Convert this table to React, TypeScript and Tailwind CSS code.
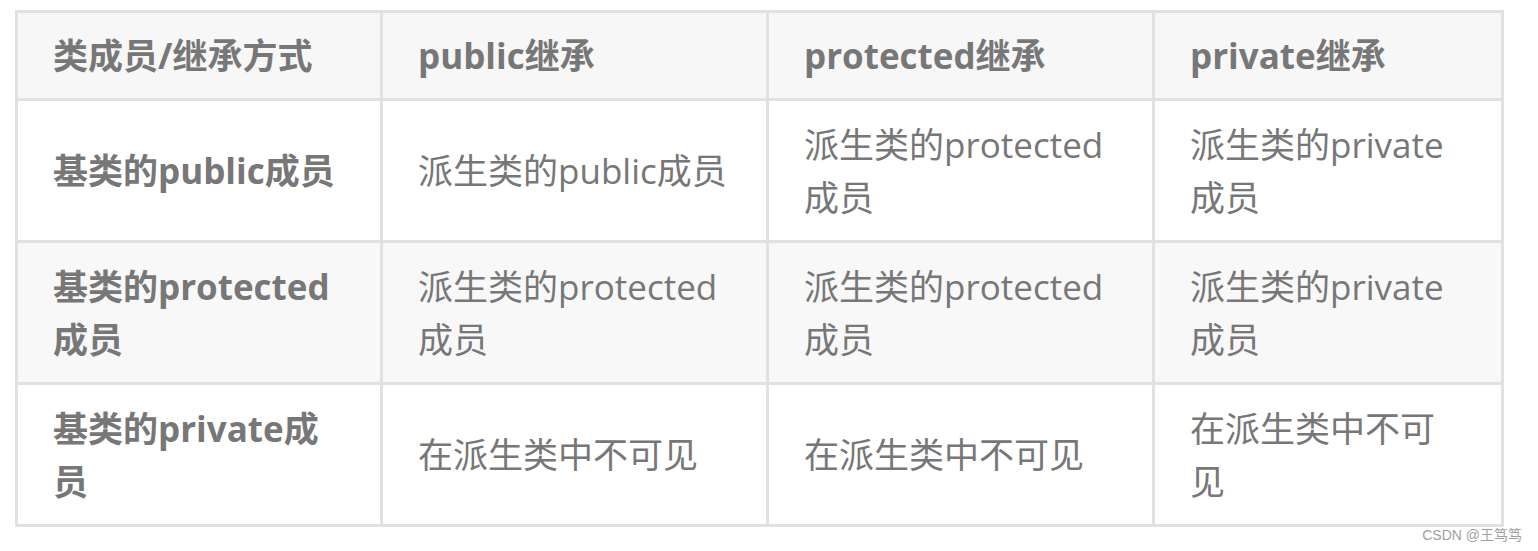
import React from 'react';

const headers = ['类成员/继承方式', 'public继承', 'protected继承', 'private继承'];

const rows: string[][] = [
  ['基类的public成员', '派生类的public成员', '派生类的protected成员', '派生类的private成员'],
  ['基类的protected成员', '派生类的protected成员', '派生类的protected成员', '派生类的private成员'],
  ['基类的private成员', '在派生类中不可见', '在派生类中不可见', '在派生类中不可见'],
];

const cell = 'border-[3px] border-[#dfe2e5] px-[35px] align-middle text-left';

export default function App() {
  return (
    <div
      className="bg-white min-h-[551px] w-[1538px] text-[#777] leading-[53px]"
      style={{ fontFamily: '"Open Sans", "Noto Sans CJK SC", sans-serif' }}
    >
      <div className="pt-[10px] pl-[15px]">
        <table className="table-fixed border-collapse w-[1486px] text-[35px]">
          <colgroup>
            <col className="w-[365px]" />
            <col className="w-[386px]" />
            <col className="w-[386px]" />
            <col className="w-[349px]" />
          </colgroup>
          <thead>
            <tr className="bg-[#f7f7f7]">
              {headers.map((h) => (
                <th key={h} className={`${cell} py-[16px] font-bold`}>
                  {h}
                </th>
              ))}
            </tr>
          </thead>
          <tbody>
            {rows.map((r, i) => (
              <tr key={i} className={i === 1 ? 'bg-[#f8f8f8]' : 'bg-white'}>
                {r.map((c, j) => (
                  <td key={j} className={`${cell} py-[16.5px] ${j === 0 ? 'font-bold' : 'font-normal'}`}>
                    {c}
                  </td>
                ))}
              </tr>
            ))}
          </tbody>
        </table>
      </div>
      <div
        className="flex justify-end pr-[16px] text-[14px] leading-[16px] text-[#a0a0a0]"
        style={{ fontFamily: '"Liberation Sans", "Noto Sans CJK SC", sans-serif' }}
      >
        CSDN @王笃笃
      </div>
    </div>
  );
}
